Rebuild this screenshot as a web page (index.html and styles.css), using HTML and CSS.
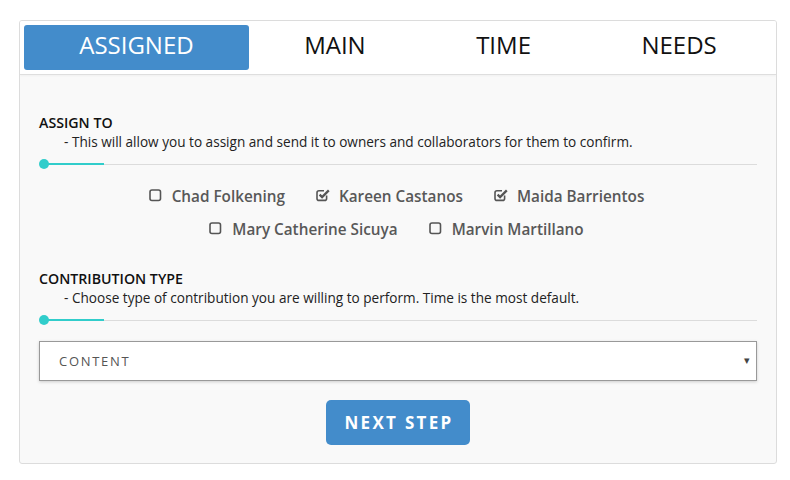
FILE: index.html
```html
<!DOCTYPE html>
<html>
<head>
<meta charset="utf-8">
<link rel="stylesheet" href="styles.css">
</head>
<body>
<div class="page">
  <div class="card">
    <nav class="tabs">
      <div class="tab active">ASSIGNED</div>
      <div class="tab">MAIN</div>
      <div class="tab">TIME</div>
      <div class="tab">NEEDS</div>
    </nav>
    <div class="body">
      <section class="section">
        <div class="title">ASSIGN TO</div>
        <div class="desc">- This will allow you to assign and send it to owners and collaborators for them to confirm.</div>
        <div class="slider"><span class="dot"></span><span class="fill"></span></div>
      </section>
      <div class="options">
        <div class="row">
          <label class="opt"><svg class="cb" viewBox="0 0 14 14"><rect x="1" y="2" width="10.5" height="10.5" rx="2" fill="none" stroke="#555" stroke-width="1.6"/></svg>Chad Folkening</label>
          <label class="opt"><svg class="cb" viewBox="0 0 14 14"><path d="M10.6 7.6V10.4Q10.6 12.4 8.6 12.4H3Q1 12.4 1 10.4V4.8Q1 2.8 3 2.8H8" fill="none" stroke="#555" stroke-width="1.6"/><path d="M3.6 6.6L6.1 9.1L12.8 2.4" fill="none" stroke="#555" stroke-width="2.3"/></svg>Kareen Castanos</label>
          <label class="opt"><svg class="cb" viewBox="0 0 14 14"><path d="M10.6 7.6V10.4Q10.6 12.4 8.6 12.4H3Q1 12.4 1 10.4V4.8Q1 2.8 3 2.8H8" fill="none" stroke="#555" stroke-width="1.6"/><path d="M3.6 6.6L6.1 9.1L12.8 2.4" fill="none" stroke="#555" stroke-width="2.3"/></svg>Maida Barrientos</label>
        </div>
        <div class="row">
          <label class="opt"><svg class="cb" viewBox="0 0 14 14"><rect x="1" y="2" width="10.5" height="10.5" rx="2" fill="none" stroke="#555" stroke-width="1.6"/></svg>Mary Catherine Sicuya</label>
          <label class="opt"><svg class="cb" viewBox="0 0 14 14"><rect x="1" y="2" width="10.5" height="10.5" rx="2" fill="none" stroke="#555" stroke-width="1.6"/></svg>Marvin Martillano</label>
        </div>
      </div>
      <section class="section second">
        <div class="title">CONTRIBUTION TYPE</div>
        <div class="desc">- Choose type of contribution you are willing to perform. Time is the most default.</div>
        <div class="slider"><span class="dot"></span><span class="fill"></span></div>
      </section>
      <div class="select">
        <span class="select-text">CONTENT</span>
        <span class="arrow">&#9662;</span>
      </div>
      <div class="actions">
        <button class="btn">NEXT STEP</button>
      </div>
    </div>
  </div>
</div>
</body>
</html>
```
FILE: styles.css
```css
* { box-sizing: border-box; }
html, body { margin: 0; padding: 0; background: #fff; }
body { font-family: "Open Sans", "Liberation Sans", sans-serif; color: #222; }
.page { padding: 20px 13px 0 19px; }
.card {
  border: 1px solid #dcdcdc;
  border-radius: 3px;
  background: #f9f9f9;
  overflow: hidden;
}
.tabs {
  display: flex;
  padding: 4px;
  background: #fff;
  border-bottom: 1px solid #dedede;
  box-shadow: 0 1px 2px rgba(0,0,0,0.04);
}
.tab {
  flex: 1 1 auto;
  text-align: center;
  font-size: 24px;
  height: 45px;
  line-height: 39px;
  padding-bottom: 6px;
  color: #111;
  border-radius: 3px;
}
.tab.active { background: #438ccb; color: #fff; }
.body { padding: 38px 19px 18px 19px; }
.title { font-size: 14.2px; font-weight: 600; line-height: 19px; color: #111; }
.desc { font-size: 13.6px; line-height: 19px; padding-left: 25px; color: #222; }
.slider {
  position: relative;
  height: 10px;
  margin-top: 8px;
  display: flex;
  align-items: center;
}
.slider::before {
  content: "";
  flex: 1;
  height: 1px;
  margin-left: 1px;
  background: #dcdcdc;
}
.slider .dot {
  position: absolute;
  left: 0; top: 0;
  width: 10px; height: 10px;
  border-radius: 50%;
  background: #31cdcb;
}
.slider .fill {
  position: absolute;
  left: 5px; top: 4px;
  width: 60px; height: 2px;
  background: #31cdcb;
}
.options { margin-top: 10px; }
.row {
  display: flex;
  justify-content: center;
  gap: 31px;
  height: 33px;
  align-items: center;
  padding-right: 3px;
}
.opt {
  display: flex;
  align-items: center;
  font-size: 15.3px;
  font-weight: 600;
  color: #585858;
}
.cb { width: 14px; height: 14px; margin-right: 9px; margin-top: -1px; }
.second { margin-top: 24px; }
.select {
  margin-top: 16px;
  height: 40px;
  background: #fff;
  border: 1px solid #999;
  box-shadow: 0 1px 3px rgba(0,0,0,0.18);
  display: flex;
  align-items: center;
  justify-content: space-between;
  padding: 0 6px 0 19px;
}
.select-text { font-size: 13px; letter-spacing: 1.7px; color: #555; }
.arrow { font-size: 11px; color: #444; margin-top: -3px; }
.actions { display: flex; justify-content: center; margin-top: 19px; }
.btn {
  font-family: "Open Sans", "Liberation Sans", sans-serif;
  height: 45px;
  width: 144px;
  border: none;
  border-radius: 5px;
  background: #438ccb;
  color: #fff;
  font-size: 17px;
  font-weight: 700;
  letter-spacing: 2.3px;
  padding: 0 0 0 2px;
}
```
